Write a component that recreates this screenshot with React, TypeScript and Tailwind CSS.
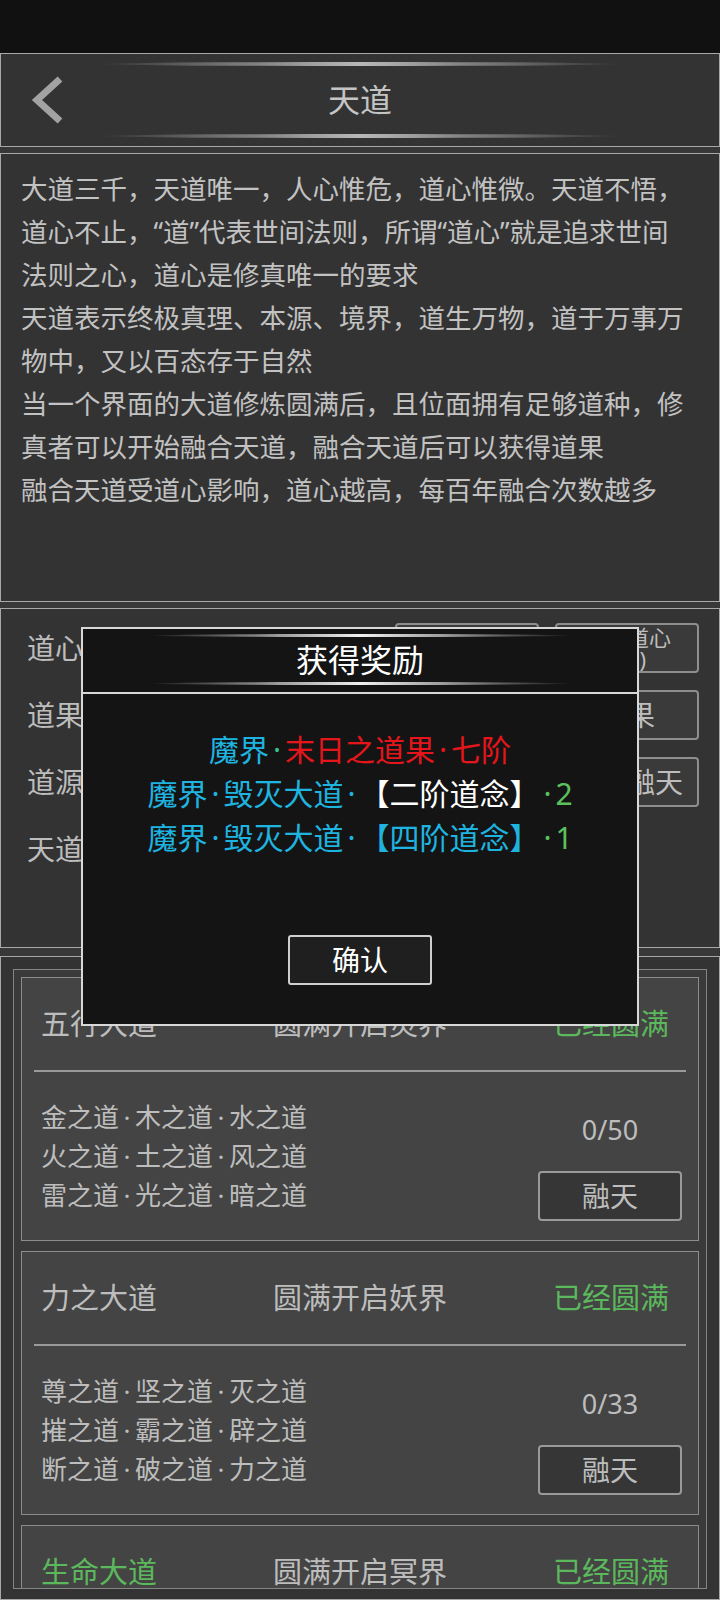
import React from "react";

const lines = [
  "大道三千，天道唯一，人心惟危，道心惟微。天道不悟，",
  "道心不止，“道”代表世间法则，所谓“道心”就是追求世间",
  "法则之心，道心是修真唯一的要求",
  "天道表示终极真理、本源、境界，道生万物，道于万事万",
  "物中，又以百态存于自然",
  "当一个界面的大道修炼圆满后，且位面拥有足够道种，修",
  "真者可以开始融合天道，融合天道后可以获得道果",
  "融合天道受道心影响，道心越高，每百年融合次数越多",
];

const daos = [
  {
    name: "五行大道",
    green: false,
    unlock: "圆满开启灵界",
    items: ["金之道·木之道·水之道", "火之道·土之道·风之道", "雷之道·光之道·暗之道"],
    count: "0/50",
  },
  {
    name: "力之大道",
    green: false,
    unlock: "圆满开启妖界",
    items: ["尊之道·坚之道·灭之道", "摧之道·霸之道·辟之道", "断之道·破之道·力之道"],
    count: "0/33",
  },
  {
    name: "生命大道",
    green: true,
    unlock: "圆满开启冥界",
    items: ["生之道·命之道·愈之道", "木之道·春之道·育之道", "魂之道·轮之道·回之道"],
    count: "0/30",
  },
];

function Dot() {
  return <span className="inline-block w-[16px] text-center font-['Noto_Sans',sans-serif]">·</span>;
}

// splits on the middle dot so the dots get the same spacing as the game font
function DotText({ text }: { text: string }) {
  const parts = text.split("·");
  return (
    <>
      {parts.map((p, i) => (
        <span key={i}>
          {i > 0 && <Dot />}
          {p}
        </span>
      ))}
    </>
  );
}

function Ornament() {
  return <div className="h-[4px] w-[520px] rounded-[50%] bg-linear-to-r from-transparent via-[#b8b8b8] to-transparent" />;
}

function ModalOrnament() {
  return <div className="h-[3px] w-[425px] rounded-[50%] bg-linear-to-r from-transparent via-[#f2f2f2] to-transparent" />;
}

function StatButton({ children }: { children: React.ReactNode }) {
  return (
    <div className="flex h-[50px] w-[144px] flex-col items-center justify-center rounded-[4px] border-2 border-[#8e8e8e] bg-[#3a3a3a] text-[28px] text-[#bdbdbd]">
      {children}
    </div>
  );
}

export default function App() {
  return (
    <div className="relative flex h-[1600px] w-[720px] flex-col overflow-hidden bg-[#383838] font-['Noto_Sans','Noto_Sans_CJK_SC',sans-serif] text-[#bdbdbd]">
      <div className="h-[53px] flex-none bg-[#111111]" />

      {/* header */}
      <div className="flex h-[94px] flex-none flex-col items-center border border-[#a8a8a8] bg-[#333333] pt-[8px]">
        <Ornament />
        <div className="grid h-[68px] w-full grid-cols-[1fr_auto_1fr] items-center">
          <div className="pl-[30px]">
            <svg width="34" height="48" viewBox="0 0 34 48">
              <path d="M29 3 L6 24 L29 45" fill="none" stroke="#a2a2a2" strokeWidth="7" />
            </svg>
          </div>
          <div className="text-[32px] text-[#c4c4c4]">天道</div>
          <div />
        </div>
        <Ornament />
      </div>

      {/* description */}
      <div className="mt-[6px] h-[449px] flex-none border border-[#a8a8a8] bg-[#333333] pl-[20px] pt-[14px] text-[26.5px] leading-[43px] text-[#c2c2c2]">
        {lines.map((l) => (
          <div key={l} className="whitespace-nowrap">
            {l}
          </div>
        ))}
      </div>

      {/* stats */}
      <div className="mt-[6px] flex h-[340px] flex-none flex-col gap-[17px] border border-[#a8a8a8] bg-[#333333] pl-[26px] pr-[20px] pt-[14px] text-[28px]">
        <div className="flex h-[50px] items-center justify-between">
          <span>道心：1260</span>
          <div className="flex gap-[16px]">
            <StatButton>感悟</StatButton>
            <StatButton>
              <span className="text-[22px] leading-[22px]">凝练道心</span>
              <span className="text-[22px] leading-[22px]">(10)</span>
            </StatButton>
          </div>
        </div>
        <div className="flex h-[50px] items-center justify-between">
          <span>道果：3</span>
          <StatButton>道果</StatButton>
        </div>
        <div className="flex h-[50px] items-center justify-between">
          <span>道源：0</span>
          <StatButton>一键融天</StatButton>
        </div>
        <div className="flex h-[50px] items-center">
          <span>天道：融合次数 3/3</span>
        </div>
      </div>

      {/* dao list */}
      <div className="mt-[8px] flex min-h-0 flex-1 flex-col border border-[#a8a8a8] bg-[#333333] px-[12px] pb-[10px] pt-[12px]">
        <div className="flex min-h-0 flex-1 flex-col gap-[10px] overflow-hidden border border-[#858585] bg-[#3a3a3a] p-[7px]">
          {daos.map((d) => (
            <div key={d.name} className="h-[264px] flex-none border border-[#8c8c8c] bg-[#444444]">
              <div className="grid h-[92px] grid-cols-[1fr_auto_1fr] items-center px-[19px] text-[29px]">
                <span className={d.green ? "text-[#5cb85c]" : "text-[#bdbdbd]"}>{d.name}</span>
                <span>{d.unlock}</span>
                <span className="pr-[10px] text-right text-[#5cb85c]">已经圆满</span>
              </div>
              <div className="mx-[12px] h-[2px] bg-[#9a9a9a]" />
              <div className="flex items-start justify-between pl-[19px] pr-[16px] pt-[26px]">
                <div className="text-[26px] leading-[39px]">
                  {d.items.map((it) => (
                    <div key={it} className="whitespace-nowrap">
                      <DotText text={it} />
                    </div>
                  ))}
                </div>
                <div className="flex w-[144px] flex-col items-center">
                  <div className="mt-[12px] text-[27px] leading-[40px]">{d.count}</div>
                  <div className="mt-[21px] flex h-[50px] w-[144px] items-center justify-center rounded-[4px] border-2 border-[#9a9a9a] bg-[#363636] text-[28px]">
                    融天
                  </div>
                </div>
              </div>
            </div>
          ))}
        </div>
      </div>

      {/* reward popup */}
      <div className="absolute left-[81px] top-[627px] flex h-[399px] w-[558px] flex-col border-2 border-[#d8d8d8] bg-[#141414]">
        <div className="flex h-[65px] flex-none flex-col items-center border-b-2 border-[#d8d8d8] pt-[5px]">
          <ModalOrnament />
          <div className="flex h-[45px] items-center text-[32px] text-white">获得奖励</div>
          <ModalOrnament />
        </div>
        <div className="flex flex-col items-center pt-[34px] text-[30px] leading-[44px]">
          <div className="whitespace-nowrap">
            <span className="text-[#1fb4e0]">魔界</span>
            <span className="text-[#3cbf8a]">
              <Dot />
            </span>
            <span className="text-[#e5161b]">
              <DotText text="末日之道果·七阶" />
            </span>
          </div>
          <div className="whitespace-nowrap">
            <span className="text-[#1fb4e0]">
              <DotText text="魔界·毁灭大道·" />
            </span>
            <span className="text-white">【二阶道念】</span>
            <span className="text-[#5cc05c]">
              <DotText text="·2" />
            </span>
          </div>
          <div className="whitespace-nowrap">
            <span className="text-[#1fb4e0]">
              <DotText text="魔界·毁灭大道·" />
            </span>
            <span className="text-[#1fb4e0]">【四阶道念】</span>
            <span className="text-[#5cc05c]">
              <DotText text="·1" />
            </span>
          </div>
          <div className="mt-[75px] flex h-[50px] w-[144px] items-center justify-center rounded-[3px] border-2 border-[#cfcfcf] bg-[#1f1f1f] text-[28px] text-white">
            确认
          </div>
        </div>
      </div>
    </div>
  );
}
